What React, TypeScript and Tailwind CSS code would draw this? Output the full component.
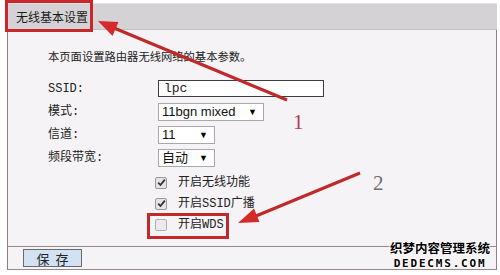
import React from 'react';

const labelFont = "font-['Liberation_Mono','Noto_Sans_CJK_SC',monospace]";

const Select = ({ value, width }: { value: string; width: string }) => (
  <div className={`${width} h-[18px] bg-white border border-[#a9a9a9] flex items-center justify-between pl-[3px] pr-[6px]`}>
    <span className="text-[13px] leading-none text-[#111] font-['Liberation_Sans','Noto_Sans_CJK_SC',sans-serif]">{value}</span>
    <span className="text-[9px] leading-none text-black">▼</span>
  </div>
);

const Check = ({ checked, label }: { checked: boolean; label: string }) => (
  <div className="h-[21px] flex items-center">
    <span className={`w-[12px] h-[12px] ml-[147px] rounded-[2px] border flex items-center justify-center ${checked ? 'border-[#9a9a9a] bg-[#e4e4e4]' : 'border-[#b0b0b0] bg-[#ebebeb]'}`}>
      {checked && (
        <svg width="9" height="9" viewBox="0 0 9 9">
          <path d="M1.2 4.6 L3.5 7 L7.8 1.6" fill="none" stroke="#333" strokeWidth="1.8" />
        </svg>
      )}
    </span>
    <span className={`ml-[11px] text-[12px] leading-none text-[#222] ${labelFont}`}>{label}</span>
  </div>
);

const FormRow = ({ label, children }: { label: string; children: React.ReactNode }) => (
  <div className="h-[23px] flex items-center">
    <span className={`w-[110px] pl-[40px] box-content text-[12px] leading-none text-[#222] ${labelFont}`}>{label}</span>
    {children}
  </div>
);

export default function App() {
  return (
    <div className="relative w-[500px] h-[275px] bg-white overflow-hidden">
      <div className="pt-[3px] pl-[7px] w-[497px]">
        {/* header */}
        <div className="h-[27px] bg-[#d4d2d4] border-t border-[#e4e2e4] border-b border-b-[#c2c0c2] flex items-center pl-[9px]">
          <span className="text-[12px] text-[#1a1a1a] font-['Noto_Sans_CJK_SC',sans-serif]">无线基本设置</span>
        </div>

        {/* body */}
        <div className="bg-[#f5f3f5] border-l border-r border-[#8f7f7f] flex flex-col">
          <div className="pt-[13px] pl-[40px] h-[47px]">
            <span className="text-[11.3px] leading-[16px] text-[#222] font-['Noto_Sans_CJK_SC',sans-serif]">本页面设置路由器无线网络的基本参数。</span>
          </div>

          <FormRow label="SSID:">
            <div className="w-[166px] h-[17px] bg-white border border-[#3c3c3c] flex items-center pl-[5px]">
              <span className="text-[13px] leading-none text-[#222] font-['Liberation_Mono',monospace]">lpc</span>
            </div>
          </FormRow>
          <FormRow label="模式:">
            <Select value="11bgn mixed" width="w-[106px]" />
          </FormRow>
          <FormRow label="信道:">
            <Select value="11" width="w-[57px]" />
          </FormRow>
          <FormRow label="频段带宽:">
            <Select value="自动" width="w-[57px]" />
          </FormRow>

          <div className="pt-[3px] pb-[11px] flex flex-col">
            <Check checked label="开启无线功能" />
            <Check checked label="开启SSID广播" />
            <Check checked={false} label="开启WDS" />
          </div>

          <div className="border-t border-[#9a8686] h-[24px] border-b border-b-[#9a8686] flex items-center pl-[15px]">
            <button className="w-[59px] h-[18px] bg-[#d3e2f2] border border-[#6a6a6a] text-[13px] leading-none text-[#222] tracking-[6px] pl-[6px] font-['Noto_Sans_CJK_SC',sans-serif]">
              保存
            </button>
          </div>
        </div>
      </div>

      {/* watermark */}
      <div className="absolute left-[389px] top-[242px] w-[102px] flex flex-col items-center leading-none text-black font-bold [text-shadow:1px_0_0_#fff,-1px_0_0_#fff,0_1px_0_#fff,0_-1px_0_#fff]">
        <span className="text-[12.5px] font-['Noto_Sans_CJK_SC',sans-serif]">织梦内容管理系统</span>
        <span className="mt-[3px] text-[11px] tracking-[1.8px] font-['DejaVu_Sans_Mono',monospace]">DEDECMS.COM</span>
      </div>

      {/* annotations */}
      <div className="absolute left-[5px] top-0 w-[88px] h-[32px] border-[3px] border-[#c8262a]" />
      <div className="absolute left-[147px] top-[213px] w-[82px] h-[26px] border-[3px] border-[#c02a2a]" />
      <svg className="absolute left-0 top-0" width="500" height="275">
        <line x1="287" y1="100" x2="114" y2="28" stroke="#c0282a" strokeWidth="3" />
        <polygon points="98,21 118.5,22 112.5,36" fill="#d42a2a" />
        <line x1="360" y1="173" x2="256" y2="216" stroke="#c0282a" strokeWidth="3" />
        <polygon points="238,223 259.5,222 254,208.5" fill="#d42a2a" />
      </svg>
      <span className="absolute left-[293px] top-[112px] text-[21px] leading-none text-[#b03a55] font-['Liberation_Serif',serif]">1</span>
      <span className="absolute left-[373px] top-[173px] text-[21px] leading-none text-[#6e6e6e] font-['Liberation_Serif',serif]">2</span>
    </div>
  );
}
